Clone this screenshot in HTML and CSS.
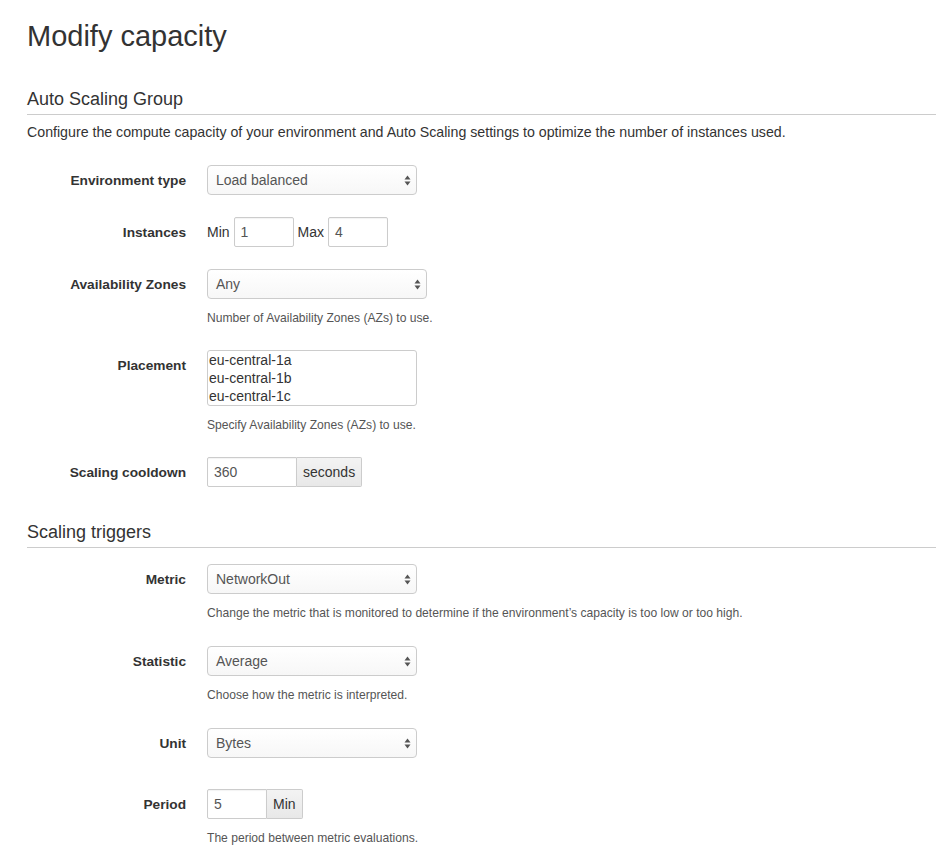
FILE: index.html
```html
<!DOCTYPE html>
<html>
<head>
<meta charset="utf-8">
<title>Modify capacity</title>
<link rel="stylesheet" href="styles.css">
</head>
<body>
<div class="page">
  <h1 class="title">Modify capacity</h1>

  <section class="section">
    <h2 class="section-title">Auto Scaling Group</h2>
    <p class="section-desc">Configure the compute capacity of your environment and Auto Scaling settings to optimize the number of instances used.</p>
    <div class="form">
      <div class="row">
        <div class="label">Environment type</div>
        <div class="control">
          <div class="select w210"><span>Load balanced</span>
            <svg class="arrows" width="7" height="11" viewBox="0 0 7 11"><path d="M3.5 0.5 L6.5 4.5 L0.5 4.5 Z M3.5 10.5 L6.5 6.5 L0.5 6.5 Z" fill="#555"/></svg>
          </div>
        </div>
      </div>
      <div class="row">
        <div class="label">Instances</div>
        <div class="control inline">
          <span class="inline-label">Min</span><div class="input w60">1</div>
          <span class="inline-label">Max</span><div class="input w60">4</div>
        </div>
      </div>
      <div class="row">
        <div class="label">Availability Zones</div>
        <div class="control">
          <div class="select w220"><span>Any</span>
            <svg class="arrows" width="7" height="11" viewBox="0 0 7 11"><path d="M3.5 0.5 L6.5 4.5 L0.5 4.5 Z M3.5 10.5 L6.5 6.5 L0.5 6.5 Z" fill="#555"/></svg>
          </div>
          <div class="help">Number of Availability Zones (AZs) to use.</div>
        </div>
      </div>
      <div class="row">
        <div class="label">Placement</div>
        <div class="control">
          <div class="multi w210">
            <div class="opt">eu-central-1a</div>
            <div class="opt">eu-central-1b</div>
            <div class="opt">eu-central-1c</div>
          </div>
          <div class="help">Specify Availability Zones (AZs) to use.</div>
        </div>
      </div>
      <div class="row">
        <div class="label">Scaling cooldown</div>
        <div class="control">
          <div class="group">
            <div class="input grouped w90">360</div><div class="addon">seconds</div>
          </div>
        </div>
      </div>
    </div>
  </section>

  <section class="section second">
    <h2 class="section-title">Scaling triggers</h2>
    <div class="form tight">
      <div class="row">
        <div class="label">Metric</div>
        <div class="control">
          <div class="select w210"><span>NetworkOut</span>
            <svg class="arrows" width="7" height="11" viewBox="0 0 7 11"><path d="M3.5 0.5 L6.5 4.5 L0.5 4.5 Z M3.5 10.5 L6.5 6.5 L0.5 6.5 Z" fill="#555"/></svg>
          </div>
          <div class="help">Change the metric that is monitored to determine if the environment’s capacity is too low or too high.</div>
        </div>
      </div>
      <div class="row">
        <div class="label">Statistic</div>
        <div class="control">
          <div class="select w210"><span>Average</span>
            <svg class="arrows" width="7" height="11" viewBox="0 0 7 11"><path d="M3.5 0.5 L6.5 4.5 L0.5 4.5 Z M3.5 10.5 L6.5 6.5 L0.5 6.5 Z" fill="#555"/></svg>
          </div>
          <div class="help">Choose how the metric is interpreted.</div>
        </div>
      </div>
      <div class="row unit-row">
        <div class="label">Unit</div>
        <div class="control">
          <div class="select w210"><span>Bytes</span>
            <svg class="arrows" width="7" height="11" viewBox="0 0 7 11"><path d="M3.5 0.5 L6.5 4.5 L0.5 4.5 Z M3.5 10.5 L6.5 6.5 L0.5 6.5 Z" fill="#555"/></svg>
          </div>
        </div>
      </div>
      <div class="row">
        <div class="label">Period</div>
        <div class="control">
          <div class="group">
            <div class="input grouped w60">5</div><div class="addon">Min</div>
          </div>
          <div class="help">The period between metric evaluations.</div>
        </div>
      </div>
    </div>
  </section>
</div>
</body>
</html>
```

FILE: styles.css
```css
* { box-sizing: border-box; }

html, body {
  margin: 0;
  padding: 0;
  background: #fff;
}

body {
  font-family: "Liberation Sans", Arial, Helvetica, sans-serif;
  color: #333;
  font-size: 13px;
}

.page {
  padding: 20px 0 0 27px;
}

.title {
  margin: 0;
  font-size: 29px;
  line-height: 32px;
  font-weight: normal;
  color: #333;
}

.section {
  margin-top: 37px;
}

.section.second {
  margin-top: 35px;
}

.section-title {
  margin: 0;
  font-size: 18px;
  line-height: 20px;
  font-weight: normal;
  color: #333;
  padding-bottom: 5px;
  border-bottom: 1px solid #ccc;
}

.section-desc {
  margin: 8px 0 0;
  font-size: 14.2px;
  line-height: 18px;
  color: #333;
}

.form {
  margin-top: 24px;
}

.form.tight {
  margin-top: 16px;
}

.row {
  display: flex;
  gap: 21px;
  margin-bottom: 22px;
}

.row.unit-row {
  margin-bottom: 31px;
}

.label {
  width: 159px;
  flex: none;
  text-align: right;
  font-weight: bold;
  font-size: 13.7px;
  line-height: 28px;
  padding-top: 2px;
  color: #333;
}

.control {
  display: flex;
  flex-direction: column;
  align-items: flex-start;
}

.control.inline {
  flex-direction: row;
  align-items: center;
}

.inline-label {
  font-size: 14px;
  color: #333;
  margin-right: 4px;
}

.inline-label + .input {
  margin-right: 4px;
}

.select {
  position: relative;
  height: 30px;
  border: 1px solid #ccc;
  border-radius: 4px;
  background: linear-gradient(#fff, #f7f7f7);
  color: #555;
  font-size: 14px;
  line-height: 28px;
  padding-left: 8px;
}

.select .arrows {
  position: absolute;
  right: 5px;
  top: 9px;
}

.w210 { width: 210px; }
.w220 { width: 220px; }
.w60 { width: 60px; }
.w90 { width: 90px; }

.input {
  height: 30px;
  border: 1px solid #ccc;
  border-radius: 2px;
  background: #fff;
  color: #555;
  font-size: 14px;
  line-height: 28px;
  padding-left: 6px;
  box-shadow: inset 0 1px 1px rgba(0, 0, 0, 0.05);
}

.group {
  display: flex;
}

.input.grouped {
  border-radius: 2px 0 0 2px;
}

.addon {
  height: 30px;
  border: 1px solid #ccc;
  border-left: none;
  border-radius: 0 2px 2px 0;
  background: linear-gradient(#f3f3f3, #e8e8e8);
  color: #333;
  font-size: 14px;
  line-height: 28px;
  padding: 0 6px;
}

.multi {
  height: 56px;
  border: 1px solid #ccc;
  border-radius: 3px;
  background: #fff;
  padding-left: 1px;
}

.opt {
  font-size: 14px;
  line-height: 18px;
  color: #333;
}

.help {
  margin: 12px 0 2px;
  font-size: 12.1px;
  line-height: 15px;
  color: #555;
}

.tight .help {
  margin-bottom: 3px;
}
```
